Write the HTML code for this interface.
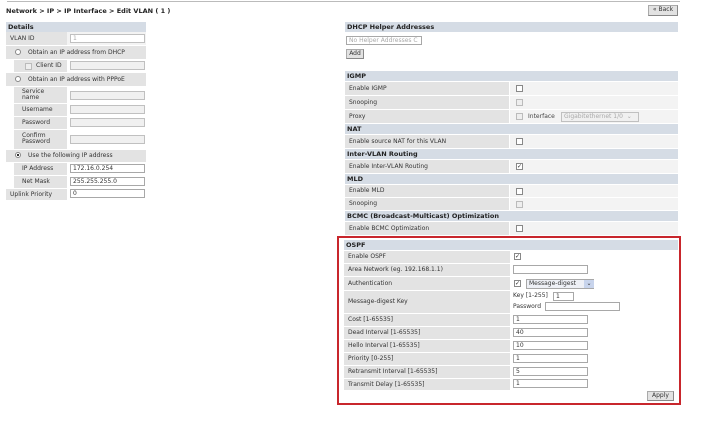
<!DOCTYPE html>
<html><head><style>
*{margin:0;padding:0;box-sizing:border-box}
body{width:719px;height:423px;background:#fff;position:relative;overflow:hidden;font-family:"DejaVu Sans","Liberation Sans",sans-serif;font-size:6px;color:#333}
div,span{position:absolute;white-space:nowrap}
.h{background:#d5dce5;font-weight:bold;color:#222;font-size:6.5px;padding:1px 2px;line-height:8px}
.l{background:#e3e3e3;padding-left:4px;line-height:13px}
.v{background:#f3f3f3}
.in{background:#fff;border:1px solid #a8a8a8;height:9px;font-size:6px;line-height:7px;padding-left:2px;color:#333}
.dis{background:#f0f0f0;border-color:#c0c0c0;color:#aaa}
.cb{width:7px;height:7px;border:1px solid #888;background:#fff;font-size:6px;line-height:5px;text-align:center;color:#222}
.cbd{border-color:#bbb;background:#eee}
.btn{background:#e2e2e2;border:1px solid #aaa;border-right-color:#888;border-bottom-color:#888;font-size:6px;line-height:8px;text-align:center;color:#333}
.rd{width:6px;height:6px;border-radius:50%;border:1px solid #888;background:#fff}
</style></head><body>
<div style="left:7px;top:1px;width:673px;height:1px;background:#bbb"></div>
<div style="left:6px;top:7px;font-weight:bold;font-size:6.5px;color:#222">Network &gt; IP &gt; IP Interface &gt; Edit VLAN ( 1 )</div>
<div class="btn" style="left:648px;top:5px;width:30px;height:11px">« Back</div>

<!-- Left -->
<div class="h" style="left:6px;top:22px;width:140px;height:10px">Details</div>
<div class="l" style="left:6px;top:32px;width:61px;height:13px">VLAN ID</div>
<div class="v" style="left:67px;top:32px;width:79px;height:13px"></div>
<div class="in dis" style="left:70px;top:34px;width:75px;background:#fff">1</div>
<div class="l" style="left:6px;top:46px;width:140px;height:13px;padding-left:22px">Obtain an IP address from DHCP</div>
<div class="rd" style="left:15px;top:49px"></div>
<div class="l" style="left:14px;top:60px;width:53px;height:12px;padding-left:22px;line-height:12px">Client ID</div>
<div class="cb cbd" style="left:25px;top:63px"></div>
<div class="in dis" style="left:70px;top:61px;width:75px"></div>
<div class="l" style="left:6px;top:73px;width:140px;height:13px;padding-left:22px">Obtain an IP address with PPPoE</div>
<div class="rd" style="left:15px;top:76px"></div>
<div class="l" style="left:14px;top:87px;width:53px;height:16px;line-height:6px;padding-top:2px;padding-left:8px">Service<br>name</div>
<div class="in dis" style="left:70px;top:91px;width:75px"></div>
<div class="l" style="left:14px;top:104px;width:53px;height:12px;padding-left:8px;line-height:12px">Username</div>
<div class="in dis" style="left:70px;top:105px;width:75px"></div>
<div class="l" style="left:14px;top:117px;width:53px;height:12px;padding-left:8px;line-height:12px">Password</div>
<div class="in dis" style="left:70px;top:118px;width:75px"></div>
<div class="l" style="left:14px;top:130px;width:53px;height:19px;line-height:6px;padding-top:3px;padding-left:8px">Confirm<br>Password</div>
<div class="in dis" style="left:70px;top:135px;width:75px"></div>
<div class="l" style="left:6px;top:150px;width:140px;height:12px;padding-left:22px;line-height:12px">Use the following IP address</div>
<div class="rd" style="left:15px;top:152px;background:radial-gradient(#222 35%,#fff 45%)"></div>
<div class="l" style="left:14px;top:163px;width:53px;height:12px;padding-left:8px;line-height:12px">IP Address</div>
<div class="in" style="left:70px;top:164px;width:75px">172.16.0.254</div>
<div class="l" style="left:14px;top:176px;width:53px;height:12px;padding-left:8px;line-height:12px">Net Mask</div>
<div class="in" style="left:70px;top:177px;width:75px">255.255.255.0</div>
<div class="l" style="left:6px;top:189px;width:61px;height:11px;line-height:11px">Uplink Priority</div>
<div class="in" style="left:70px;top:189px;width:75px">0</div>

<!-- Right -->
<div class="h" style="left:345px;top:22px;width:333px;height:10px">DHCP Helper Addresses</div>
<div class="in" style="left:346px;top:36px;width:76px;color:#aaa">No Helper Addresses C</div>
<div class="btn" style="left:346px;top:49px;width:18px;height:10px">Add</div>

<div class="h" style="left:345px;top:71px;width:333px;height:10px">IGMP</div>
<div class="l" style="left:345px;top:82px;width:164px;height:13px">Enable IGMP</div><div class="v" style="left:510px;top:82px;width:168px;height:13px"></div><div class="cb" style="left:516px;top:85px"></div>
<div class="l" style="left:345px;top:96px;width:164px;height:13px">Snooping</div><div class="v" style="left:510px;top:96px;width:168px;height:13px"></div><div class="cb cbd" style="left:516px;top:99px"></div>
<div class="l" style="left:345px;top:110px;width:164px;height:13px">Proxy</div><div class="v" style="left:510px;top:110px;width:168px;height:13px"></div><div class="cb cbd" style="left:516px;top:113px"></div>
<span style="left:528px;top:113px;color:#444">Interface</span>
<div class="in dis" style="left:561px;top:112px;width:78px;height:10px">Gigabitethernet 1/0 &nbsp;⌄</div>
<div class="h" style="left:345px;top:124px;width:333px;height:10px">NAT</div>
<div class="l" style="left:345px;top:135px;width:164px;height:13px">Enable source NAT for this VLAN</div><div class="v" style="left:510px;top:135px;width:168px;height:13px"></div><div class="cb" style="left:516px;top:138px"></div>
<div class="h" style="left:345px;top:149px;width:333px;height:10px">Inter-VLAN Routing</div>
<div class="l" style="left:345px;top:160px;width:164px;height:13px">Enable Inter-VLAN Routing</div><div class="v" style="left:510px;top:160px;width:168px;height:13px"></div><div class="cb" style="left:516px;top:163px">✓</div>
<div class="h" style="left:345px;top:174px;width:333px;height:10px">MLD</div>
<div class="l" style="left:345px;top:185px;width:164px;height:12px;line-height:12px">Enable MLD</div><div class="v" style="left:510px;top:185px;width:168px;height:12px"></div><div class="cb" style="left:516px;top:188px"></div>
<div class="l" style="left:345px;top:198px;width:164px;height:12px;line-height:12px">Snooping</div><div class="v" style="left:510px;top:198px;width:168px;height:12px"></div><div class="cb cbd" style="left:516px;top:201px"></div>
<div class="h" style="left:345px;top:211px;width:333px;height:10px">BCMC (Broadcast-Multicast) Optimization</div>
<div class="l" style="left:345px;top:222px;width:164px;height:13px">Enable BCMC Optimization</div><div class="v" style="left:510px;top:222px;width:168px;height:13px"></div><div class="cb" style="left:516px;top:225px"></div>

<!-- OSPF -->
<div style="left:337px;top:236px;width:344px;height:169px;border:2px solid #c8262c"></div>
<div class="h" style="left:344px;top:240px;width:334px;height:10px">OSPF</div>
<div class="l" style="left:344px;top:251px;width:166px;height:12px;line-height:12px">Enable OSPF</div><div class="cb" style="left:514px;top:253px">✓</div>
<div class="l" style="left:344px;top:264px;width:166px;height:12px;line-height:12px">Area Network (eg. 192.168.1.1)</div><div class="in" style="left:513px;top:265px;width:75px">&nbsp;</div>
<div class="l" style="left:344px;top:277px;width:166px;height:13px">Authentication</div><div class="cb" style="left:514px;top:280px">✓</div>
<div class="in" style="left:526px;top:279px;width:68px;height:10px;background:#eef0f6">Message-digest <span style="left:57px;top:0;width:10px;background:#c8d4ec;height:8px;text-align:center">⌄</span></div>
<div class="l" style="left:344px;top:291px;width:166px;height:22px;line-height:22px">Message-digest Key</div>
<span style="left:513px;top:292px">Key [1-255]</span><div class="in" style="left:553px;top:292px;width:21px">1</div>
<span style="left:513px;top:303px">Password</span><div class="in" style="left:545px;top:302px;width:75px"></div>
<div class="l" style="left:344px;top:314px;width:166px;height:12px;line-height:12px">Cost [1-65535]</div><div class="in" style="left:513px;top:315px;width:75px">1</div>
<div class="l" style="left:344px;top:327px;width:166px;height:12px;line-height:12px">Dead Interval [1-65535]</div><div class="in" style="left:513px;top:328px;width:75px">40</div>
<div class="l" style="left:344px;top:340px;width:166px;height:12px;line-height:12px">Hello Interval [1-65535]</div><div class="in" style="left:513px;top:341px;width:75px">10</div>
<div class="l" style="left:344px;top:353px;width:166px;height:12px;line-height:12px">Priority [0-255]</div><div class="in" style="left:513px;top:354px;width:75px">1</div>
<div class="l" style="left:344px;top:366px;width:166px;height:12px;line-height:12px">Retransmit Interval [1-65535]</div><div class="in" style="left:513px;top:367px;width:75px">5</div>
<div class="l" style="left:344px;top:379px;width:166px;height:11px;line-height:11px">Transmit Delay [1-65535]</div><div class="in" style="left:513px;top:379px;width:75px">1</div>
<div class="btn" style="left:647px;top:391px;width:27px;height:10px">Apply</div>
</body></html>
